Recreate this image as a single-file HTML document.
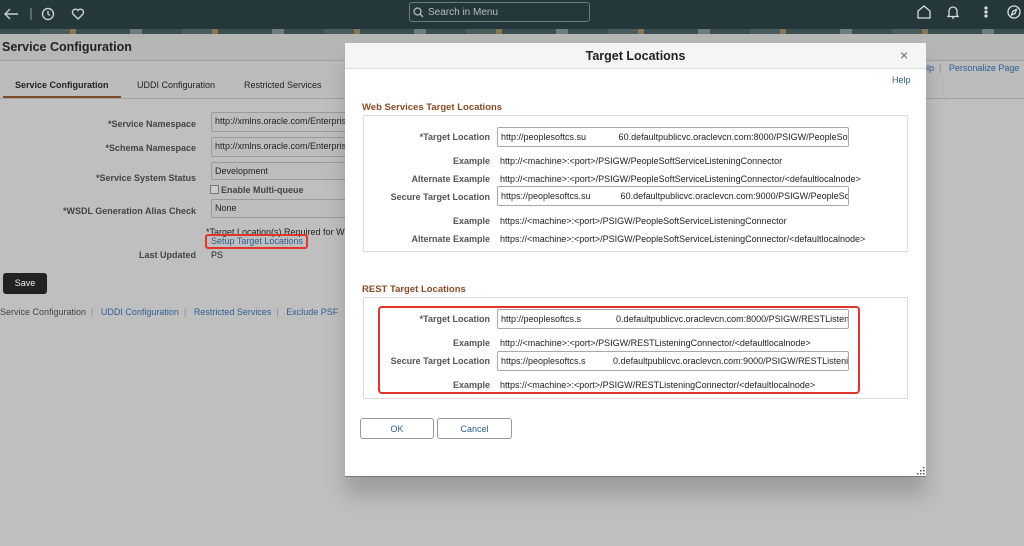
<!DOCTYPE html>
<html><head><meta charset="utf-8"><style>
*{margin:0;padding:0;box-sizing:border-box}
body{width:1024px;height:546px;overflow:hidden;background:#bfbfbf;font-family:"Liberation Sans",sans-serif;position:relative;font-size:9px;color:#222}
.a{position:absolute;white-space:nowrap}
.lbl{position:absolute;text-align:right;color:#444;font-weight:bold;font-size:9px;white-space:nowrap}
.inp{position:absolute;border:1px solid #9a9a9a;background:#bdbdbd;font-size:9px;padding:3px 3px;white-space:nowrap;overflow:hidden;color:#222;border-radius:2px}
.m{position:absolute;left:345px;top:43px;width:581px;height:434px;background:#fff;box-shadow:0 18px 20px rgba(0,0,0,.18);border-bottom:1px solid #777}
.ml{position:absolute;color:#555;font-weight:bold;font-size:9px;white-space:nowrap;text-align:right;width:140px}
.mi{position:absolute;left:152px;width:352px;height:20px;border:1px solid #a8a8a8;border-radius:2px;font-size:9px;padding:4px 3px;white-space:nowrap;overflow:hidden;color:#222}
.mt{position:absolute;left:155px;font-size:9px;white-space:nowrap;color:#222}
.lnk{color:#2c5f94}
</style></head><body>
<div class="a" style="left:0;top:0;width:1024px;height:29px;background:#24373a"></div>
<div class="a" style="left:0;top:29px;width:1024px;height:5px;background:repeating-linear-gradient(90deg,#3a4f50 0 40px,#4a5e5e 40px 70px,#8a7550 70px 76px,#3a4f50 76px 130px,#6d7d7d 130px 142px)"></div>
<svg class="a" style="left:2px;top:6px" width="100" height="16" viewBox="0 0 100 16" fill="none" stroke="#c8d0d0" stroke-width="1.4"><path d="M16 8H3M8 3L3 8l5 5"/><path d="M29 2v12" stroke="#6d7f80"/><circle cx="46" cy="8" r="5.5"/><path d="M46 5v3l2 1.5"/><path d="M76 13l-5-5a3 3 0 0 1 5-3.5a3 3 0 0 1 5 3.5z"/></svg>
<div class="a" style="left:409px;top:2px;width:181px;height:20px;border:1px solid #6b7b7c;border-radius:3px;color:#b6bfbf;font-size:10px;padding:4px 0 0 18px">Search in Menu</div>
<svg class="a" style="left:413px;top:7px" width="11" height="11" fill="none" stroke="#b6bfbf" stroke-width="1.3"><circle cx="4.5" cy="4.5" r="3.5"/><path d="M7 7l3 3"/></svg>
<svg class="a" style="left:915px;top:4px" width="109" height="16" fill="none" stroke="#d8dede" stroke-width="1.3"><path d="M3 7l6-5 6 5v7H3z"/><path d="M34 11V7a4 4 0 0 1 8 0v4l1 1.5H33zM37 14h2"/><circle cx="71" cy="4" r="1" fill="#d8dede"/><circle cx="71" cy="8" r="1" fill="#d8dede"/><circle cx="71" cy="12" r="1" fill="#d8dede"/><circle cx="99" cy="8" r="6"/><path d="M101.5 5.5l-1.5 4-3.5 1.5 1.5-4z"/></svg>
<div class="a" style="left:0;top:34px;width:1024px;height:27px;background:#b5b7b7;border-bottom:1px solid #a0a0a0"></div>
<div class="a" style="left:2px;top:40px;font-size:12.5px;font-weight:bold;color:#222">Service Configuration</div>
<div class="a" style="left:0;top:62px;width:1024px;height:37px;background:#bcbcbc;border-bottom:1px solid #a2a2a2"></div>
<div class="a" style="left:15px;top:80px;font-size:9px;font-weight:bold">Service Configuration</div>
<div class="a" style="left:3px;top:96px;width:118px;height:2px;background:#7a4a2a"></div>
<div class="a" style="left:137px;top:80px;font-size:9px">UDDI Configuration</div>
<div class="a" style="left:244px;top:80px;font-size:9px">Restricted Services</div>
<div class="a lnk" style="left:922px;top:63px;font-size:9px">elp &nbsp;<span style="color:#888">|</span>&nbsp;&nbsp; Personalize Page</div>
<div class="lbl" style="left:0;width:196px;top:119px">*Service Namespace</div>
<div class="inp" style="left:211px;top:112px;width:150px;height:20px">http://xmlns.oracle.com/Enterprise</div>
<div class="lbl" style="left:0;width:196px;top:143px">*Schema Namespace</div>
<div class="inp" style="left:211px;top:137px;width:150px;height:20px">http://xmlns.oracle.com/Enterprise</div>
<div class="lbl" style="left:0;width:196px;top:173px">*Service System Status</div>
<div class="inp" style="left:211px;top:162px;width:150px;height:18px">Development</div>
<div class="a" style="left:210px;top:185px;width:9px;height:9px;border:1px solid #777;background:#ccc"></div>
<div class="a" style="left:221px;top:185px;font-weight:bold;color:#444">Enable Multi-queue</div>
<div class="lbl" style="left:0;width:196px;top:206px">*WSDL Generation Alias Check</div>
<div class="inp" style="left:211px;top:199px;width:150px;height:19px">None</div>
<div class="a" style="left:206px;top:227px">*Target Location(s) Required for W</div>
<div class="a lnk" style="left:211px;top:236px">Setup Target Locations</div>
<div class="a" style="left:205px;top:234px;width:103px;height:15px;border:2px solid #e0352b;border-radius:3px"></div>
<div class="lbl" style="left:0;width:196px;top:250px">Last Updated</div>
<div class="a" style="left:211px;top:250px">PS</div>
<div class="a" style="left:3px;top:273px;width:44px;height:21px;background:#222;color:#eee;border-radius:3px;text-align:center;padding-top:5px">Save</div>
<div class="a" style="left:0;top:307px;color:#444">Service Configuration <span style="color:#888">&nbsp;|&nbsp;&nbsp;</span> <span class="lnk">UDDI Configuration</span> <span style="color:#888">&nbsp;|&nbsp;&nbsp;</span> <span class="lnk">Restricted Services</span> <span style="color:#888">&nbsp;|&nbsp;&nbsp;</span> <span class="lnk">Exclude PSF</span></div>

<div class="m">
<div class="a" style="left:0;top:0;width:581px;height:26px;background:#f4f5f5;border-bottom:1px solid #ddd"></div>
<div class="a" style="left:0;width:581px;top:6px;text-align:center;font-size:12.5px;font-weight:bold;color:#222">Target Locations</div>
<div class="a" style="left:555px;top:4px;font-size:14px;color:#666">×</div>
<div class="a lnk" style="left:547px;top:32px;font-size:9px">Help</div>
<div class="a" style="left:17px;top:59px;font-size:9.5px;font-weight:bold;color:#8b4a24">Web Services Target Locations</div>
<div class="a" style="left:18px;top:72px;width:545px;height:137px;border:1px solid #ddd"></div>
<div class="ml" style="left:5px;top:89px">*Target Location</div>
<div class="mi" style="top:84px">http://peoplesoftcs.su&nbsp;&nbsp;&nbsp;&nbsp;&nbsp;&nbsp;&nbsp;&nbsp;&nbsp;&nbsp;&nbsp;&nbsp;&nbsp;60.defaultpublicvc.oraclevcn.com:8000/PSIGW/PeopleSoft</div>
<div class="ml" style="left:5px;top:113px">Example</div>
<div class="mt" style="top:113px">http://&lt;machine&gt;:&lt;port&gt;/PSIGW/PeopleSoftServiceListeningConnector</div>
<div class="ml" style="left:5px;top:131px">Alternate Example</div>
<div class="mt" style="top:131px">http://&lt;machine&gt;:&lt;port&gt;/PSIGW/PeopleSoftServiceListeningConnector/&lt;defaultlocalnode&gt;</div>
<div class="ml" style="left:5px;top:149px">Secure Target Location</div>
<div class="mi" style="top:143px">https://peoplesoftcs.su&nbsp;&nbsp;&nbsp;&nbsp;&nbsp;&nbsp;&nbsp;&nbsp;&nbsp;&nbsp;&nbsp;&nbsp;60.defaultpublicvc.oraclevcn.com:9000/PSIGW/PeopleSoft</div>
<div class="ml" style="left:5px;top:173px">Example</div>
<div class="mt" style="top:173px">https://&lt;machine&gt;:&lt;port&gt;/PSIGW/PeopleSoftServiceListeningConnector</div>
<div class="ml" style="left:5px;top:191px">Alternate Example</div>
<div class="mt" style="top:191px">https://&lt;machine&gt;:&lt;port&gt;/PSIGW/PeopleSoftServiceListeningConnector/&lt;defaultlocalnode&gt;</div>

<div class="a" style="left:17px;top:241px;font-size:9.5px;font-weight:bold;color:#8b4a24">REST Target Locations</div>
<div class="a" style="left:18px;top:254px;width:545px;height:102px;border:1px solid #ddd"></div>
<div class="a" style="left:33px;top:263px;width:482px;height:88px;border:2px solid #e0352b;border-radius:4px"></div>
<div class="ml" style="left:5px;top:271px">*Target Location</div>
<div class="mi" style="top:266px">http://peoplesoftcs.s&nbsp;&nbsp;&nbsp;&nbsp;&nbsp;&nbsp;&nbsp;&nbsp;&nbsp;&nbsp;&nbsp;&nbsp;&nbsp;&nbsp;0.defaultpublicvc.oraclevcn.com:8000/PSIGW/RESTListening</div>
<div class="ml" style="left:5px;top:295px">Example</div>
<div class="mt" style="top:295px">http://&lt;machine&gt;:&lt;port&gt;/PSIGW/RESTListeningConnector/&lt;defaultlocalnode&gt;</div>
<div class="ml" style="left:5px;top:313px">Secure Target Location</div>
<div class="mi" style="top:308px">https://peoplesoftcs.s&nbsp;&nbsp;&nbsp;&nbsp;&nbsp;&nbsp;&nbsp;&nbsp;&nbsp;&nbsp;&nbsp;0.defaultpublicvc.oraclevcn.com:9000/PSIGW/RESTListening</div>
<div class="ml" style="left:5px;top:337px">Example</div>
<div class="mt" style="top:337px">https://&lt;machine&gt;:&lt;port&gt;/PSIGW/RESTListeningConnector/&lt;defaultlocalnode&gt;</div>

<div class="a lnk" style="left:15px;top:375px;width:74px;height:21px;border:1px solid #999;border-radius:3px;text-align:center;padding-top:5px;font-size:9px">OK</div>
<div class="a lnk" style="left:92px;top:375px;width:75px;height:21px;border:1px solid #999;border-radius:3px;text-align:center;padding-top:5px;font-size:9px">Cancel</div>
<svg class="a" style="left:572px;top:424px" width="8" height="8" fill="#555"><rect x="6" y="0" width="1.5" height="1.5"/><rect x="3" y="3" width="1.5" height="1.5"/><rect x="6" y="3" width="1.5" height="1.5"/><rect x="0" y="6" width="1.5" height="1.5"/><rect x="3" y="6" width="1.5" height="1.5"/><rect x="6" y="6" width="1.5" height="1.5"/></svg>
</div>
</body></html>
